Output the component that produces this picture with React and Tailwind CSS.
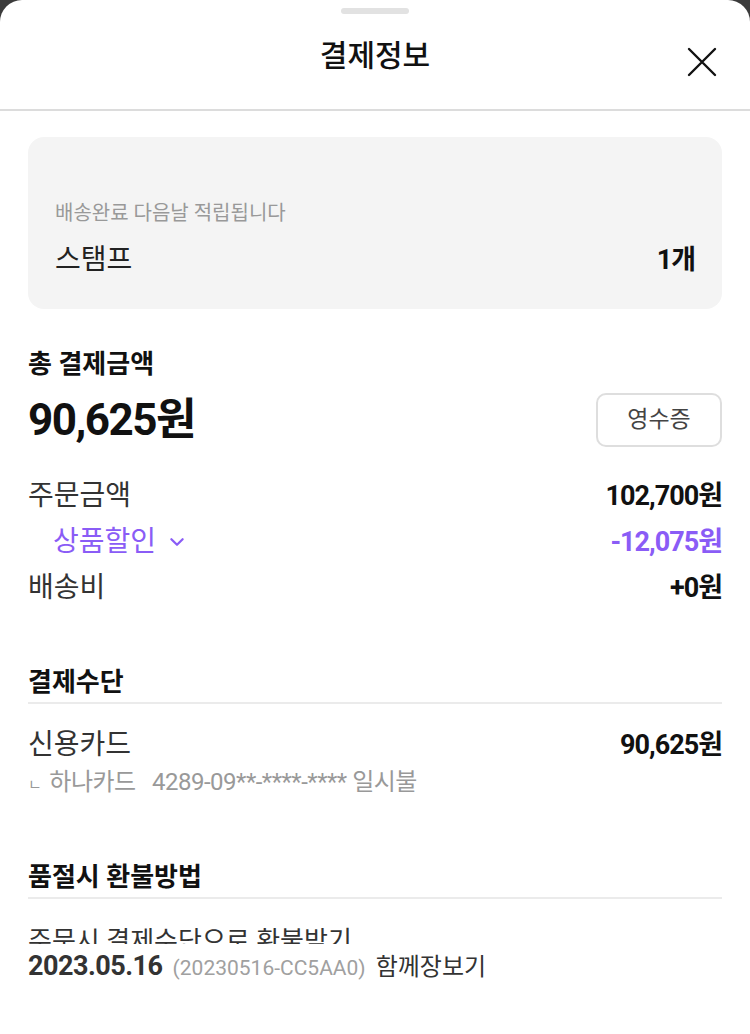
import { useState } from 'react'

const purple = 'text-[#8a5cf6]'

const Row = ({ label, value, className = '', labelClass = '', valueClass = '' }) => (
  <div className={`flex items-center justify-between ${className}`}>
    <span className={`text-[28px] leading-[36px] ${labelClass}`}>{label}</span>
    <span className={`text-[27px] leading-[36px] font-bold tracking-[-1px] ${valueClass}`}>{value}</span>
  </div>
)

const SectionTitle = ({ children, divider }) => (
  <div className={divider ? 'border-b-2 border-[#ebebeb] pb-[3px]' : ''}>
    <h2 className="text-[26px] leading-[34px] font-bold text-[#111]">{children}</h2>
  </div>
)

const App = () => {
  const [showDiscount, setShowDiscount] = useState(false)

  return (
    <div
      className="w-[750px] h-[1034px] bg-[#3b3b3b] overflow-hidden"
      style={{ fontFamily: "Roboto, 'Noto Sans CJK KR', 'Noto Sans', sans-serif" }}
    >
      <div className="bg-white rounded-t-[22px] h-full flex flex-col text-[#222]">
        {/* Header */}
        <div className="border-b-2 border-[#dcdcdc] shrink-0">
          <div className="flex justify-center pt-[8px]">
            <div className="w-[68px] h-[6px] rounded-full bg-[#e2e2e2]" />
          </div>
          <div className="relative h-[95px] flex items-center justify-center">
            <h1 className="text-[30px] leading-[38px] font-medium text-[#111] -mt-[12px]">결제정보</h1>
            <button className="absolute right-[32px] top-[32px] w-[32px] h-[32px] flex items-center justify-center">
              <svg width="32" height="32" viewBox="0 0 32 32" fill="none" stroke="#111" strokeWidth="2.4" strokeLinecap="round">
                <path d="M3 3 L29 29 M29 3 L3 29" />
              </svg>
            </button>
          </div>
        </div>

        {/* Scroll body */}
        <div className="flex-1 min-h-0 overflow-hidden px-[28px] pt-[26px]">
          {/* Stamp card */}
          <div className="bg-[#f4f4f4] rounded-[16px] h-[172px] px-[27px] pt-[62px]">
            <p className="text-[20px] leading-[28px] text-[#999]">배송완료 다음날 적립됩니다</p>
            <div className="flex items-center justify-between mt-[15px]">
              <span className="text-[28px] leading-[36px] text-[#222]">스탬프</span>
              <span className="text-[27px] leading-[36px] font-bold tracking-[-1px] text-[#111]">1개</span>
            </div>
          </div>

          {/* Total */}
          <div className="mt-[38px]">
            <SectionTitle>총 결제금액</SectionTitle>
            <div className="flex items-center justify-between mt-[12px]">
              <span className="text-[44px] leading-[54px] font-bold tracking-[-1.5px] text-[#111]">90,625원</span>
              <button className="w-[126px] h-[54px] border-2 border-[#dedede] rounded-[10px] text-[23px] text-[#444]">
                영수증
              </button>
            </div>
          </div>

          <div className="mt-[31px] flex flex-col gap-[10px]">
            <Row label="주문금액" value="102,700원" labelClass="text-[#333]" valueClass="text-[#111]" />
            <div className="flex items-center justify-between pl-[25px]">
              <button
                className={`flex items-center gap-[12px] text-[28px] leading-[36px] ${purple}`}
                onClick={() => setShowDiscount(!showDiscount)}
              >
                상품할인
                <svg width="18" height="18" viewBox="0 0 16 16" fill="none" stroke="#8a5cf6" strokeWidth="2" strokeLinecap="round" strokeLinejoin="round">
                  <path d="M3 5.5 L8 10.5 L13 5.5" />
                </svg>
              </button>
              <span className={`text-[27px] leading-[36px] font-bold tracking-[-1px] ${purple}`}>-12,075원</span>
            </div>
            <Row label="배송비" value="+0원" labelClass="text-[#333]" valueClass="text-[#111]" />
          </div>

          {/* Payment method */}
          <div className="mt-[59px]">
            <SectionTitle divider>결제수단</SectionTitle>
            <Row label="신용카드" value="90,625원" className="mt-[23px]" labelClass="text-[#333]" valueClass="text-[#111]" />
            <p className="text-[24px] leading-[32px] text-[#999] mt-[3px] tracking-[-0.5px]">
              <span className="text-[15px] mr-[8px]">ㄴ</span>하나카드&nbsp;&nbsp;&nbsp;4289-09**-****-**** 일시불
            </p>
          </div>

          {/* Refund */}
          <div className="mt-[59px]">
            <SectionTitle divider>품절시 환불방법</SectionTitle>
            <p className="text-[26px] leading-[34px] text-[#333] mt-[25px]">주문시 결제수단으로 환불받기</p>
          </div>
        </div>

        {/* Order footer */}
        <div className="shrink-0 h-[90px] bg-white px-[28px] pt-[5px]">
          <div className="flex items-baseline gap-[10px]">
            <span className="text-[27px] leading-[34px] font-bold tracking-[-0.5px] text-[#333]">2023.05.16</span>
            <span className="text-[21px] text-[#a0a0a0]">(20230516-CC5AA0)</span>
            <span className="text-[24px] text-[#333]">함께장보기</span>
          </div>
        </div>
      </div>
    </div>
  )
}

export default App
